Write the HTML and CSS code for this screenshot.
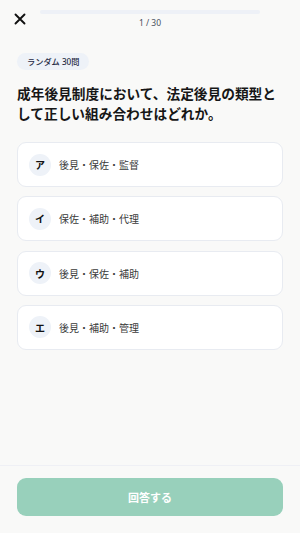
FILE: index.html
```html
<!DOCTYPE html>
<html lang="ja">
  <head>
    <meta charset="utf-8">
    <link rel="stylesheet" href="styles.css">
  </head>
  <body>
    <div class="quiz">
      <div class="top-bar">
        <button class="close-btn" aria-label="閉じる">
          <svg width="12" height="12" viewBox="0 0 12 12">
            <path d="M1.5 1.5 L10.5 10.5 M10.5 1.5 L1.5 10.5" stroke="#111" stroke-width="1.9" stroke-linecap="round" fill="none"/>
          </svg>
        </button>
        <div class="progress">
          <div class="track"><div class="fill" style="width: 0%"></div></div>
          <div class="count">1 / 30</div>
        </div>
        <div></div>
      </div>

      <div class="content">
        <span class="badge">ランダム 30問</span>
        <h1 class="question">成年後見制度において、法定後見の類型として正しい組み合わせはどれか。</h1>

        <div class="options">
          <div class="option"><span class="mark">ア</span><span class="label">後見・保佐・監督</span></div>
          <div class="option"><span class="mark">イ</span><span class="label">保佐・補助・代理</span></div>
          <div class="option"><span class="mark">ウ</span><span class="label">後見・保佐・補助</span></div>
          <div class="option"><span class="mark">エ</span><span class="label">後見・補助・管理</span></div>
        </div>
      </div>

      <div class="footer">
        <button class="answer-btn" disabled>回答する</button>
      </div>
    </div>
  </body>
</html>
```

FILE: styles.css
```css
body {
  margin: 0;
  padding: 0;
  background: #f9f9f8;
  font-family: "Noto Sans", "Noto Sans CJK JP", sans-serif;
  color: #1a1a1a;
}

.quiz {
  display: flex;
  flex-direction: column;
  height: 100vh;
}

.top-bar {
  display: grid;
  grid-template-columns: 26px 1fr 26px;
  align-items: start;
  padding: 10px 14px 0;
}

.close-btn {
  border: none;
  background: none;
  padding: 0;
  margin-top: 3px;
  width: 12px;
  height: 12px;
  display: flex;
}

.progress {
  display: flex;
  flex-direction: column;
  align-items: center;
}

.track {
  width: 100%;
  height: 4px;
  border-radius: 2px;
  background: #eef1f7;
  overflow: hidden;
}

.fill {
  height: 100%;
  background: #98d0bb;
}

.count {
  margin-top: 3px;
  font-size: 8.5px;
  line-height: 12px;
  color: #4a5060;
}

.content {
  flex: 1;
  padding: 0 17px;
}

.badge {
  display: inline-block;
  margin-top: 24px;
  padding: 0 10px;
  height: 17px;
  line-height: 17px;
  border-radius: 9px;
  background: #eef2f8;
  color: #1f2a44;
  font-size: 8.2px;
  font-weight: 500;
}

.question {
  margin: 14px 0 18px;
  font-size: 13.7px;
  line-height: 20px;
  font-weight: 700;
  color: #161616;
}

.options {
  display: flex;
  flex-direction: column;
  gap: 9.3px;
}

.option {
  display: flex;
  align-items: center;
  gap: 8px;
  height: 43px;
  padding: 0 11px;
  background: #fff;
  border: 1px solid #e8ebf1;
  border-radius: 9px;
}

.mark {
  width: 22px;
  height: 22px;
  border-radius: 50%;
  background: #eef2f8;
  display: flex;
  justify-content: center;
  align-items: center;
  font-size: 10px;
  font-weight: 700;
  color: #111;
}

.label {
  font-size: 10px;
  color: #3a3a3a;
}

.footer {
  border-top: 1px solid #eff0f5;
  padding: 12px 17px 17px;
}

.answer-btn {
  width: 100%;
  height: 38px;
  border: none;
  border-radius: 9px;
  background: #98d0bb;
  color: #fff;
  font-family: inherit;
  font-size: 11px;
  font-weight: 700;
}
```
